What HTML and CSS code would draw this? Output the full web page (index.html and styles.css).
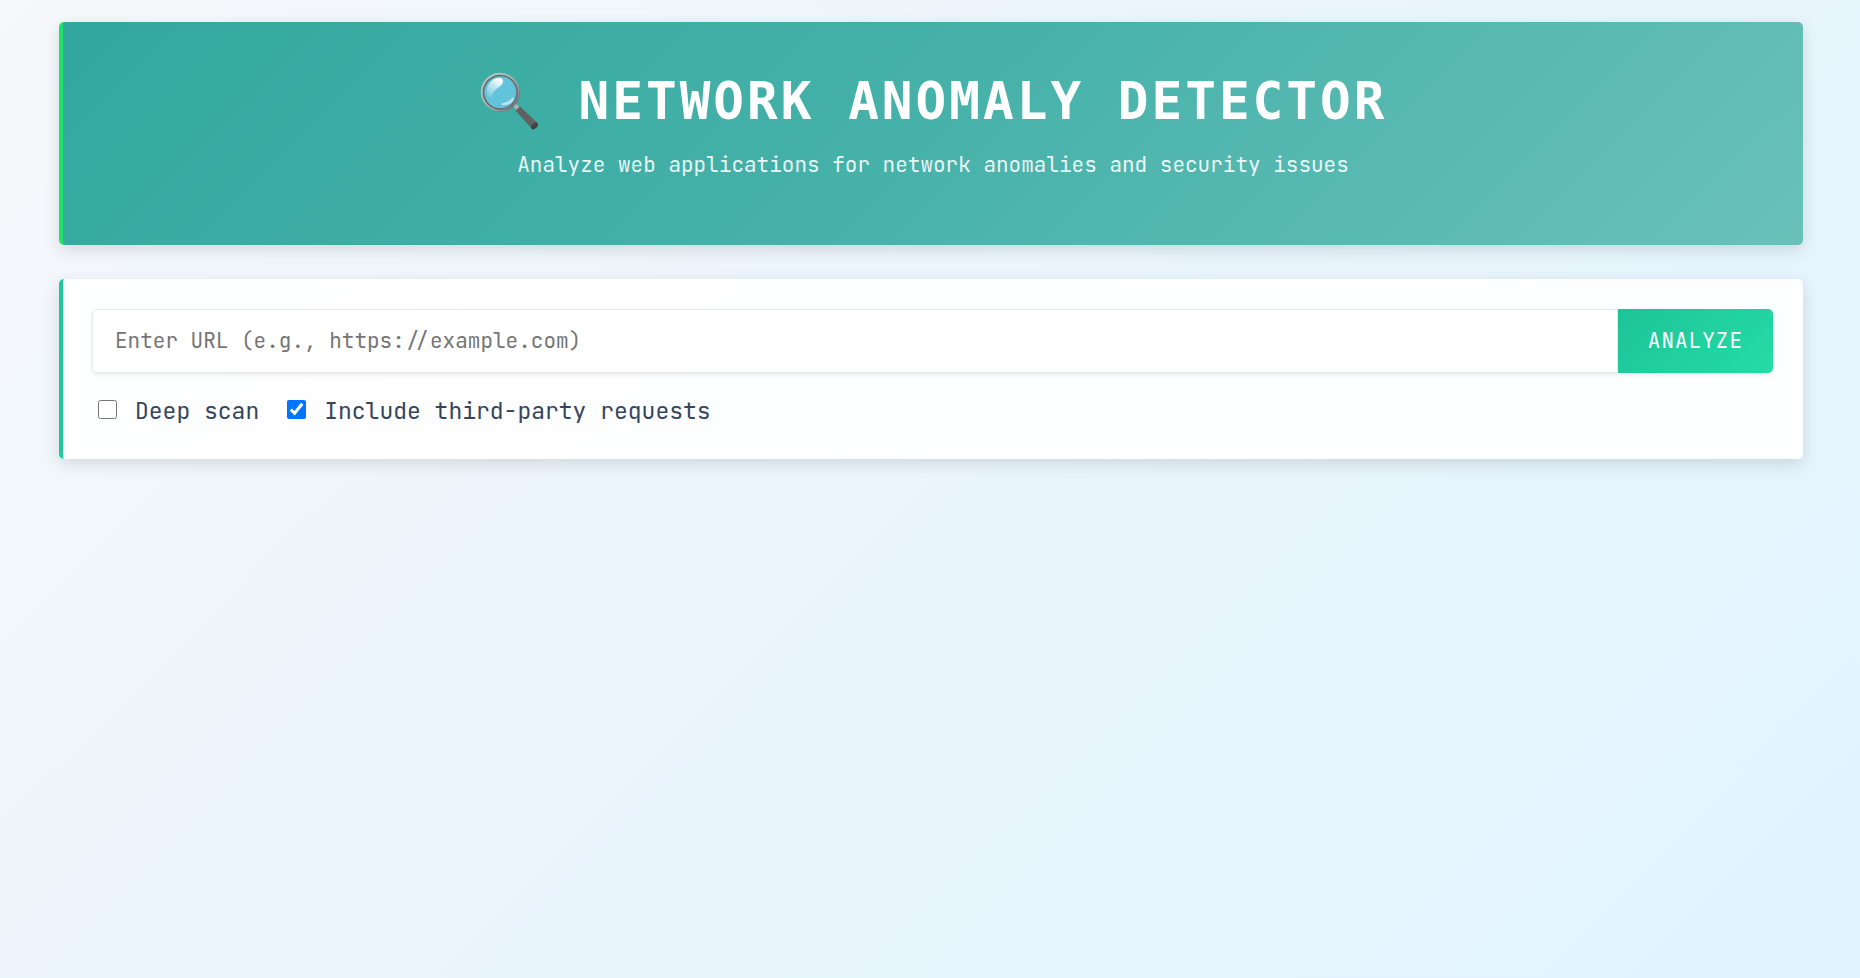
FILE: index.html
```html
<!DOCTYPE html>
<html lang="en">
<head>
<meta charset="utf-8">
<meta name="viewport" content="width=device-width, initial-scale=1">
<title>Network Anomaly Detector</title>
<link rel="stylesheet" href="styles.css">
</head>
<body>
<main class="container">
  <header class="hero">
    <h1 class="hero-title">
      <svg class="hero-icon" viewBox="0 0 60 60" aria-hidden="true">
        <defs>
          <linearGradient id="rim" x1="0" y1="0" x2="1" y2="1">
            <stop offset="0" stop-color="#c4c4c4"/>
            <stop offset="0.5" stop-color="#b4b4b4"/>
            <stop offset="1" stop-color="#777"/>
          </linearGradient>
          <linearGradient id="shine" x1="0.7" y1="0" x2="0.2" y2="1">
            <stop offset="0" stop-color="#fff"/>
            <stop offset="1" stop-color="#fff" stop-opacity="0.1"/>
          </linearGradient>
        </defs>
        <path d="M34 36.500l3-3 3.500 3.500-3 3z" fill="#b0b0b0"/>
        <path d="M36.500 40.500l4.500-4 17.500 16.500q1 2-1 4t-4.500 2z" fill="#616161"/>
        <ellipse cx="55.500" cy="56" rx="4" ry="2.500" transform="rotate(-45 55.500 56)" fill="#424242"/>
        <circle cx="22" cy="23" r="18.500" fill="#5e6565"/>
        <circle cx="21" cy="22" r="18.200" fill="#5fc3d8" stroke="url(#rim)" stroke-width="2"/>
        <circle cx="21.300" cy="22.300" r="16.800" fill="#62c3da" stroke="#666d6e" stroke-width="1.600"/>
        <path d="M8 25C6 15 14 7 21 8c5 1 3 7-1 9-4 3-5 4-7 8-1 4-4 3-5 0z" fill="url(#shine)"/>
        <path d="M23 35c4 1 10-1 12-6 0-2-2-1-3 0-3 3-5 3-8 4-2 1-2 2-1 2z" fill="#b5e5f0"/>
      </svg>
      <span>NETWORK ANOMALY DETECTOR</span>
    </h1>
    <p class="hero-subtitle">Analyze web applications for network anomalies and security issues</p>
  </header>
  <form class="card">
    <div class="url-row">
      <input class="url-input" type="text" aria-label="URL" placeholder="Enter URL (e.g., https://example.com)">
      <button class="analyze" type="button">ANALYZE</button>
    </div>
    <div class="options">
      <label class="option" for="deep"><input class="check" type="checkbox" id="deep">Deep scan</label>
      <label class="option" for="third"><input class="check" type="checkbox" id="third" checked>Include third-party requests</label>
    </div>
  </form>
</main>
</body>
</html>
```
FILE: styles.css
```css
* {
  box-sizing: border-box;
}

body {
  margin: 0;
  min-height: 100vh;
  padding: 22px 57px 22px 59px;
  font-family: "JetBrains Mono", "DejaVu Sans Mono", monospace;
  font-size: 21px;
  color: #34455c;
  background: linear-gradient(135deg, #f6f8fb 0%, #ebf5fc 43%, #e0f4fe 100%);
}

.container {
  display: flex;
  flex-direction: column;
  gap: 34px;
}

.hero {
  padding: 48px 24px 64px;
  border-left: 4px solid #1de36d;
  border-radius: 5px;
  background: linear-gradient(135deg, #33a89e, #45b1a9 47%, #69c1ba);
  box-shadow: 0 5px 16px rgba(0, 0, 0, 0.12);
  color: #fff;
  text-align: center;
}

.hero-title {
  display: flex;
  align-items: flex-start;
  justify-content: center;
  gap: 40px;
  margin: 0 0 15px;
  font-family: "DejaVu Sans Mono", monospace;
  font-size: 51px;
  line-height: 64px;
  letter-spacing: 3px;
}

.hero-icon {
  width: 60px;
  height: 60px;
  flex: none;
}

.hero-subtitle {
  margin: 0;
  line-height: 32px;
  color: rgba(255, 255, 255, 0.9);
}

.card {
  padding: 30px 30px 31px 29px;
  border-left: 4px solid #1fc89b;
  border-radius: 5px;
  background: rgba(255, 255, 255, 0.9);
  box-shadow: 0 5px 16px rgba(0, 0, 0, 0.12);
}

.url-row {
  display: flex;
  height: 64px;
  border-radius: 5px;
  box-shadow: 0 2px 4px rgba(0, 0, 0, 0.08);
}

.url-input {
  flex: 1;
  min-width: 0;
  padding: 0 22px 2px;
  border: 1px solid #e6e8ec;
  border-radius: 5px 0 0 5px;
  background: #fff;
  font: inherit;
  color: #34455c;
}

.url-input::placeholder {
  color: #757575;
}

.analyze {
  padding: 0 30px 2px;
  border: 0;
  border-radius: 0 5px 5px 0;
  background: linear-gradient(135deg, #1cc498, #26dba6);
  color: #fff;
  font-family: inherit;
  font-size: 21px;
  letter-spacing: 1px;
}

.options {
  display: flex;
  flex-wrap: wrap;
  gap: 28px;
  margin-top: 21px;
  padding-left: 6px;
  font-size: 23px;
  line-height: 34px;
}

.option {
  display: flex;
  align-items: flex-start;
  gap: 18px;
}

.check {
  width: 19px;
  height: 19px;
  margin: 6px 0 0;
}
```
